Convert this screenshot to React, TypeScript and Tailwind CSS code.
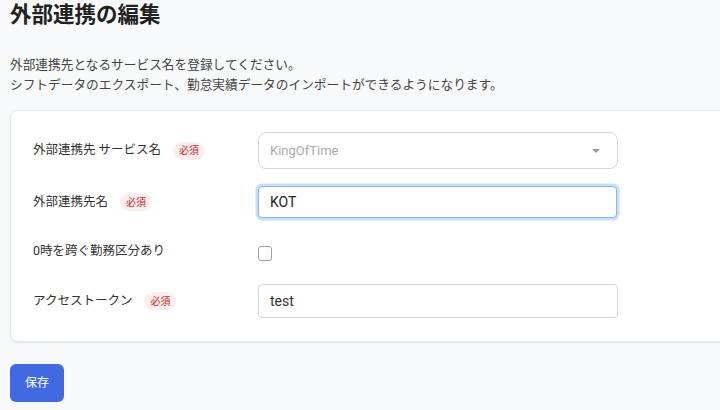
import React, { useState } from 'react';

const font = { fontFamily: 'Roboto, "Noto Sans CJK JP", sans-serif' };

function Required() {
  return (
    <span className="ml-[12px] inline-flex h-[18px] items-center rounded-full bg-[#fdeeee] px-[6px] text-[10px] text-[#c62828]">
      必須
    </span>
  );
}

export default function App() {
  const [name, setName] = useState('KOT');
  const [token, setToken] = useState('test');
  const [overnight, setOvernight] = useState(false);

  return (
    <div
      className="h-[410px] w-[720px] overflow-hidden bg-[#f8f9fb] pl-[10px] text-[#333]"
      style={font}
    >
      <h1 className="pt-[1px] text-[21.5px] font-bold leading-[28px] text-[#222]">外部連携の編集</h1>

      <div className="mt-[26px] text-[12.7px] leading-[20px] text-[#444]">
        <p>外部連携先となるサービス名を登録してください。</p>
        <p>シフトデータのエクスポート、勤怠実績データのインポートができるようになります。</p>
      </div>

      <div className="mt-[15px] w-[760px] rounded-[8px] border border-[#e6e8ec] bg-white pb-[23px] pl-[22px] pt-[21px] shadow-[0_1px_3px_rgba(0,0,0,0.08)]">
        <div className="flex flex-col gap-4">
          <div className="flex h-[37px] items-center">
            <div className="flex w-[225px] items-center text-[12.5px]">
              外部連携先 サービス名
              <Required />
            </div>
            <div className="relative flex h-[37px] w-[360px] items-center rounded-[8px] border border-[#d4d6db] bg-white px-[11px] text-[13px] text-[#aaa]">
              KingOfTime
              <span className="absolute right-[17px] top-[16px] h-0 w-0 border-l-[4px] border-r-[4px] border-t-[4px] border-l-transparent border-r-transparent border-t-[#999]" />
            </div>
          </div>

          <div className="flex h-[34px] items-center">
            <div className="flex w-[225px] items-center text-[12.5px]">
              外部連携先名
              <Required />
            </div>
            <input
              value={name}
              onChange={(e) => setName(e.target.value)}
              className="h-[32px] w-[359px] rounded-[4px] border border-[#8fb2f2] bg-white px-[11px] text-[14px] text-[#222] outline-none ring-[2.5px] ring-[#c8defd]"
            />
          </div>

          <div className="flex h-[33px] items-center">
            <div className="w-[225px] text-[12.5px]">0時を跨ぐ勤務区分あり</div>
            <input
              type="checkbox"
              checked={overnight}
              onChange={(e) => setOvernight(e.target.checked)}
              className="mt-[3px] h-[15px] w-[14px] appearance-none rounded-[3px] border border-[#9aa0a8] bg-white"
            />
          </div>

          <div className="flex h-[34px] items-center">
            <div className="flex w-[225px] items-center text-[12.5px]">
              アクセストークン
              <Required />
            </div>
            <input
              value={token}
              onChange={(e) => setToken(e.target.value)}
              className="h-[34px] w-[360px] rounded-[4px] border border-[#d4d6db] bg-white px-[11px] text-[14px] text-[#333] outline-none"
            />
          </div>
        </div>
      </div>

      <button
        type="button"
        className="mt-[22px] h-[38px] w-[54px] rounded-[6px] bg-[#4169e1] text-[12px] text-white"
      >
        保存
      </button>
    </div>
  );
}
